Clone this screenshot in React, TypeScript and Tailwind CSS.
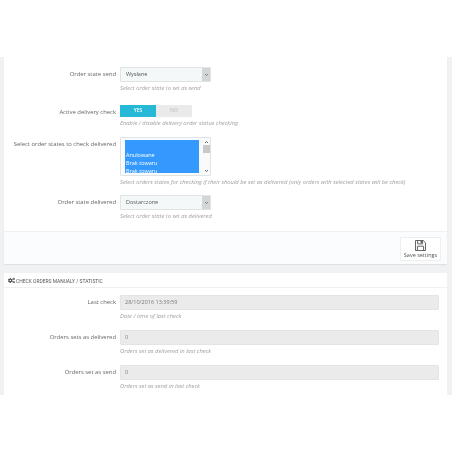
import { FaCogs } from "react-icons/fa";

const font = "font-['Open_Sans',sans-serif]";

function Help({ children }: { children: string }) {
  return <p className="mt-[2px] text-[5.8px] leading-[9px] italic text-[#a0a0a0] whitespace-nowrap">{children}</p>;
}

function Row({ label, help, className, children }: { label: string; help: string; className: string; children: React.ReactNode }) {
  return (
    <div className={`flex ${className}`}>
      <div className="w-[112px] shrink-0 pt-[2px] text-right text-[5.9px] leading-[11px] text-[#666] whitespace-nowrap">{label}</div>
      <div className="ml-[4px] flex-1">
        {children}
        <Help>{help}</Help>
      </div>
    </div>
  );
}

function Select({ value }: { value: string }) {
  return (
    <div className="flex h-[15px] w-[91px] items-center rounded-[1px] border border-[#dfe3e6] bg-[#f5f8f9]">
      <span className="flex-1 pl-[5px] text-[5.5px] text-[#555]">{value}</span>
      <span className="flex h-full w-[8px] items-center justify-center bg-[#d3d6d8]">
        <svg width="5" height="4" viewBox="0 0 5 4"><path d="M1 1l1.5 1.5L4 1" fill="none" stroke="#666" strokeWidth="0.8" /></svg>
      </span>
    </div>
  );
}

function ReadOnly({ value }: { value: string }) {
  return (
    <div className="flex h-[15px] w-[319px] items-center rounded-[1px] border border-[#e4e4e4] bg-[#ebebeb] pl-[4px] text-[5.5px] text-[#777]">
      {value}
    </div>
  );
}

function SaveIcon() {
  return (
    <svg width="11" height="11" viewBox="0 0 11 11" fill="none" stroke="#555" strokeWidth="0.9">
      <path d="M.5.5h7.7l2.3 2.3v7.7H.5z" />
      <path d="M2.6.5v3.4h5V.5" />
      <path d="M2.4 10.5V6.2h6.2v4.3" />
      <rect x="5.6" y="1" width="1.3" height="2.2" fill="#555" stroke="none" />
    </svg>
  );
}

export default function App() {
  return (
    <div className={`h-[452px] w-[452px] overflow-hidden bg-white pt-[57px] blur-[0.35px] ${font}`}>
      <div className="h-[338px] bg-[#eff1f3] pl-[4px] pr-[5px]">
        <section className="rounded-[1px] bg-white shadow-[0_1px_1px_#dcdfe2]">
          <div className="h-[174px] pt-[10px]">
            <Row label="Order state send" help="Select order state to set as send" className="h-[38px]">
              <Select value="Wysłane" />
            </Row>
            <Row label="Active delivery check" help="Enable / disable delivery order status checking" className="h-[32px]">
              <div className="flex h-[12px] w-[72px] text-[5px] font-semibold">
                <span className="flex w-[36px] items-center justify-center bg-[#25b9d7] text-white">YES</span>
                <span className="flex w-[36px] items-center justify-center bg-[#eaeaea] text-[#c4c4c4]">NO</span>
              </div>
            </Row>
            <Row label="Select order states to check delivered" help="Select orders states for checking if their should be set as delivered (only orders with selected states will be check)" className="h-[58px]">
              <div className="flex h-[39px] w-[91px] rounded-[1px] border border-[#dfe3e6] bg-[#f8fafb] py-[2px] pl-[4px]">
                <div className="flex h-full w-[75px] flex-col justify-end overflow-hidden bg-[#3399ff] pl-[1px] text-[5.5px] leading-[8px] text-white">
                  <span>Anulowane</span>
                  <span>Brak towaru</span>
                  <span className="h-[6px]">Brak towaru</span>
                </div>
                <div className="ml-[4px] flex w-[7px] flex-col items-center justify-between bg-[#fafafa] text-[#555]">
                  <svg width="5" height="4" viewBox="0 0 5 4"><path d="M1 3l1.5-1.5L4 3" fill="none" stroke="#444" strokeWidth="0.8" /></svg>
                  <div className="mb-auto mt-[1px] h-[8px] w-[7px] bg-[#c8c8c8]" />
                  <svg width="5" height="4" viewBox="0 0 5 4"><path d="M1 1l1.5 1.5L4 1" fill="none" stroke="#444" strokeWidth="0.8" /></svg>
                </div>
              </div>
            </Row>
            <Row label="Order state delivered" help="Select order state to set as delivered" className="h-[26px]">
              <Select value="Dostarczone" />
            </Row>
          </div>
          <div className="flex h-[33px] justify-end border-t border-[#eef1f4] bg-[#fbfcfd] pt-[5px] pr-[6px]">
            <button className="flex h-[24px] w-[41px] flex-col items-center rounded-[1px] border border-[#eceef0] bg-white pt-[2px] text-[#555]">
              <SaveIcon />
              <span className="text-[5.5px] leading-[8px] whitespace-nowrap">Save settings</span>
            </button>
          </div>
        </section>
        <section className="mt-[9px] h-[122px] bg-white">
          <div className="flex h-[15px] items-center gap-[1px] border-b border-[#eef1f4] pl-[4px] text-[#555]">
            <FaCogs className="h-[7px] w-[7px]" />
            <span className="origin-left scale-x-[0.82] text-[6px] whitespace-nowrap font-['Roboto',sans-serif]">CHECK ORDERS MANUALY / STATISTIC</span>
          </div>
          <div className="pt-[7px]">
            <Row label="Last check" help="Date / time of last check" className="h-[35px]">
              <ReadOnly value="28/10/2016 13:39:59" />
            </Row>
            <Row label="Orders sets as delivered" help="Orders set as delivered in last check" className="h-[35px]">
              <ReadOnly value="0" />
            </Row>
            <Row label="Orders set as send" help="Orders set as send in last check" className="h-[28px]">
              <ReadOnly value="0" />
            </Row>
          </div>
        </section>
      </div>
    </div>
  );
}
